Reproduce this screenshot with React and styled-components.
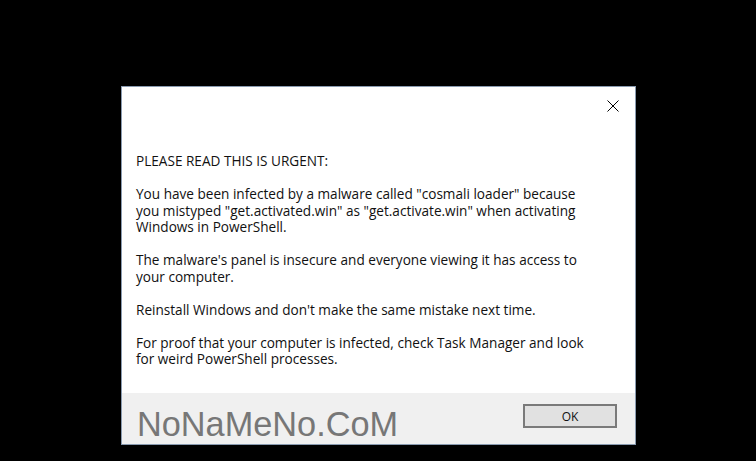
import styled, { createGlobalStyle } from "styled-components";

const GlobalStyle = createGlobalStyle`
  html, body {
    margin: 0;
    padding: 0;
    background: #000;
  }
`;

const Screen = styled.div`
  width: 756px;
  height: 461px;
  background: #000;
  padding: 86px 0 0 121px;
  box-sizing: border-box;
`;

const Dialog = styled.div`
  width: 515px;
  height: 359px;
  box-sizing: border-box;
  border: 1px solid #8a9bb0;
  background: #fff;
  display: flex;
  flex-direction: column;
`;

const TitleBar = styled.div`
  height: 38px;
  display: flex;
  justify-content: flex-end;
  align-items: center;
  padding-right: 14px;
`;

const CloseButton = styled.button`
  width: 16px;
  height: 16px;
  padding: 0;
  border: 0;
  background: transparent;
  display: flex;
  align-items: center;
  justify-content: center;
`;

const Body = styled.div`
  flex: 1;
  padding: 28px 0 0 14px;
  font-family: "Open Sans", "Noto Sans", sans-serif;
  font-size: 13.6px;
  line-height: 16.5px;
  color: #111;
`;

const Paragraph = styled.p`
  margin: 0 0 16.5px;
  white-space: nowrap;
`;

const Footer = styled.div`
  height: 51px;
  background: #f0f0f0;
  display: flex;
  justify-content: space-between;
  align-items: flex-start;
  padding: 0 18px 0 15px;
`;

const Watermark = styled.div`
  font-family: "Liberation Sans", Arial, sans-serif;
  font-size: 34.3px;
  color: #777;
  line-height: 40px;
  margin-top: 11px;
`;

const OkButton = styled.button`
  margin-top: 11px;
  width: 94px;
  height: 24px;
  box-sizing: border-box;
  border: 2px solid #7a7a7a;
  background: #e1e1e1;
  font-family: "Open Sans", "Noto Sans", sans-serif;
  font-size: 12px;
  color: #111;
  padding: 0;
`;

const paragraphs = [
  ["PLEASE READ THIS IS URGENT:"],
  [
    'You have been infected by a malware called "cosmali loader" because',
    'you mistyped "get.activated.win" as "get.activate.win" when activating',
    "Windows in PowerShell.",
  ],
  [
    "The malware's panel is insecure and everyone viewing it has access to",
    "your computer.",
  ],
  ["Reinstall Windows and don't make the same mistake next time."],
  [
    "For proof that your computer is infected, check Task Manager and look",
    "for weird PowerShell processes.",
  ],
];

export default function App() {
  return (
    <>
      <GlobalStyle />
      <Screen>
        <Dialog>
          <TitleBar>
            <CloseButton aria-label="Close">
              <svg width="12" height="12" viewBox="0 0 12 12">
                <path d="M0.5 0.5 L11.5 11.5 M11.5 0.5 L0.5 11.5" stroke="#000" strokeWidth="1" />
              </svg>
            </CloseButton>
          </TitleBar>
          <Body>
            {paragraphs.map((lines, i) => (
              <Paragraph key={i}>
                {lines.map((line, j) => (
                  <span key={j}>
                    {line}
                    {j < lines.length - 1 && <br />}
                  </span>
                ))}
              </Paragraph>
            ))}
          </Body>
          <Footer>
            <Watermark>NoNaMeNo.CoM</Watermark>
            <OkButton>OK</OkButton>
          </Footer>
        </Dialog>
      </Screen>
    </>
  );
}
